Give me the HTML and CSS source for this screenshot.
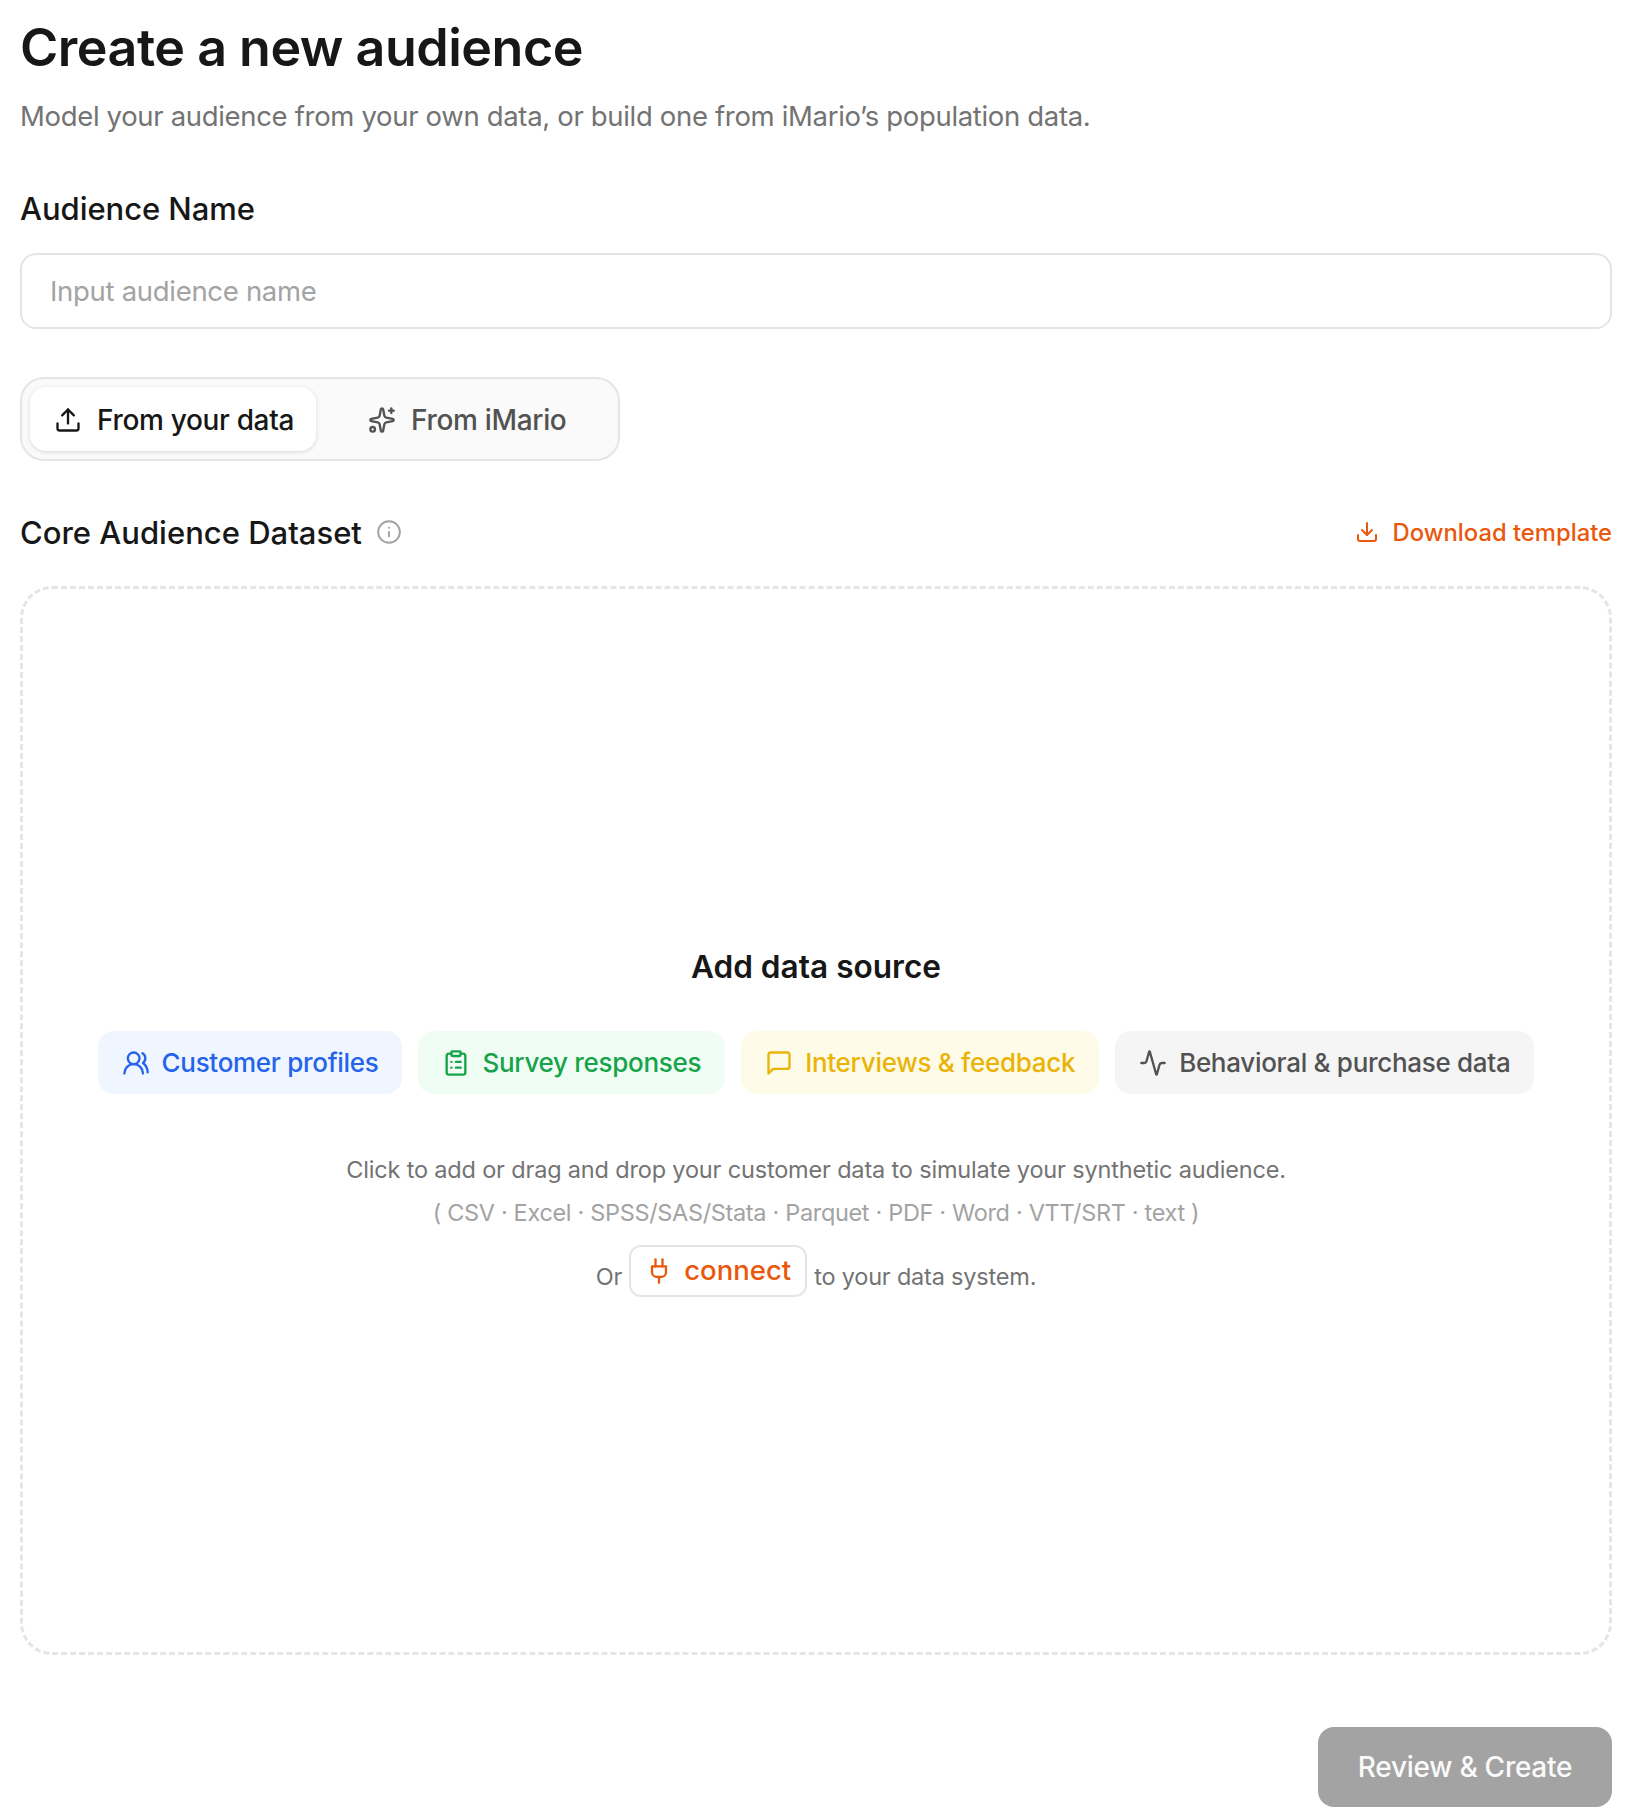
FILE: index.html
```html
<!DOCTYPE html>
<html lang="en">
<head>
<meta charset="utf-8">
<title>Create a new audience</title>
<link rel="stylesheet" href="styles.css">
</head>
<body>
<main class="page">
  <h1 class="title">Create a new audience</h1>
  <p class="subtitle">Model your audience from your own data, or build one from iMario’s population data.</p>
  <label class="label" for="name">Audience Name</label>
  <input class="name-input" id="name" type="text" placeholder="Input audience name">
  <div class="tabs">
    <button class="tab tab-active" type="button">
      <svg class="icon-tab" viewBox="0 0 24 24"><path d="M12 3v12"/><path d="m17 8-5-5-5 5"/><path d="M21 15v4a2 2 0 0 1-2 2H5a2 2 0 0 1-2-2v-4"/></svg>
      From your data
    </button>
    <button class="tab" type="button">
      <svg class="icon-tab" viewBox="0 0 24 24"><path d="M11.017 2.814a1 1 0 0 1 1.966 0l1.051 5.558a2 2 0 0 0 1.594 1.594l5.558 1.051a1 1 0 0 1 0 1.966l-5.558 1.051a2 2 0 0 0-1.594 1.594l-1.051 5.558a1 1 0 0 1-1.966 0l-1.051-5.558a2 2 0 0 0-1.594-1.594l-5.558-1.051a1 1 0 0 1 0-1.966l5.558-1.051a2 2 0 0 0 1.594-1.594z"/><path d="M20 2v4"/><path d="M22 4h-4"/><circle cx="4" cy="20" r="2"/></svg>
      From iMario
    </button>
  </div>
  <div class="section-head">
    <div class="section-title">
      <span>Core Audience Dataset</span>
      <svg class="icon-info" viewBox="0 0 24 24"><circle cx="12" cy="12" r="10"/><path d="M12 16v-4"/><path d="M12 8h.01"/></svg>
    </div>
    <a class="download" href="#">
      <svg class="icon-download" viewBox="0 0 24 24"><path d="M12 15V3"/><path d="M21 15v4a2 2 0 0 1-2 2H5a2 2 0 0 1-2-2v-4"/><path d="m7 10 5 5 5-5"/></svg>
      Download template
    </a>
  </div>
  <section class="dropzone">
    <h2 class="drop-title">Add data source</h2>
    <div class="chips">
      <span class="chip chip-blue"><svg class="icon-chip" viewBox="0 0 24 24"><path d="M18 21a8 8 0 0 0-16 0"/><circle cx="10" cy="8" r="5"/><path d="M22 20c0-3.37-2-6.5-4-8a5 5 0 0 0-.45-8.3"/></svg>Customer profiles</span>
      <span class="chip chip-green"><svg class="icon-chip" viewBox="0 0 24 24"><rect x="8" y="2" width="8" height="4" rx="1" ry="1"/><path d="M16 4h2a2 2 0 0 1 2 2v14a2 2 0 0 1-2 2H6a2 2 0 0 1-2-2V6a2 2 0 0 1 2-2h2"/><path d="M12 11h4"/><path d="M12 16h4"/><path d="M8 11h.01"/><path d="M8 16h.01"/></svg>Survey responses</span>
      <span class="chip chip-yellow"><svg class="icon-chip" viewBox="0 0 24 24"><path d="M21 15a2 2 0 0 1-2 2H7l-4 4V5a2 2 0 0 1 2-2h14a2 2 0 0 1 2 2z"/></svg>Interviews &amp; feedback</span>
      <span class="chip chip-gray"><svg class="icon-chip" viewBox="0 0 24 24"><path d="M22 12h-2.48a2 2 0 0 0-1.93 1.46l-2.35 8.36a.25.25 0 0 1-.48 0L9.24 2.18a.25.25 0 0 0-.48 0l-2.35 8.36A2 2 0 0 1 4.49 12H2"/></svg>Behavioral &amp; purchase data</span>
    </div>
    <p class="hint">Click to add or drag and drop your customer data to simulate your synthetic audience.</p>
    <p class="formats">( CSV · Excel · SPSS/SAS/Stata · Parquet · PDF · Word · VTT/SRT · text )</p>
    <div class="connect-row">
      <span>Or</span>
      <button class="connect" type="button"><svg class="icon-plug" viewBox="0 0 24 24"><path d="M12 22v-5"/><path d="M9 8V2"/><path d="M15 8V2"/><path d="M18 8v5a4 4 0 0 1-4 4h-4a4 4 0 0 1-4-4V8Z"/></svg>connect</button>
      <span>to your data system.</span>
    </div>
  </section>
  <div class="actions">
    <button class="submit" type="button">Review &amp; Create</button>
  </div>
</main>
</body>
</html>
```
FILE: styles.css
```css
* { box-sizing: border-box; }
html, body { margin: 0; background: #fff; }
body { font-family: Inter, "Liberation Sans", sans-serif; color: #171717; }
svg { fill: none; stroke: currentColor; stroke-width: 2; stroke-linecap: round; stroke-linejoin: round; flex: none; }
button { font-family: inherit; cursor: pointer; }
.page { padding: 24px 28px 13px 20px; display: flex; flex-direction: column; }
.title { margin: 0; font-size: 52px; line-height: 48px; font-weight: 600; letter-spacing: -0.5px; color: #171717; }
.subtitle { margin: 26px 0 0; font-size: 27.5px; line-height: 36px; letter-spacing: -0.33px; color: #737373; }
.label { margin-top: 59px; font-size: 31px; line-height: 32px; font-weight: 500; letter-spacing: -0.05px; color: #171717; }
.name-input { margin-top: 28px; height: 76px; border: 2px solid #e5e5e5; border-radius: 16px; padding: 0 28px; font: 400 27.5px Inter, sans-serif; letter-spacing: -0.3px; outline: none; }
.name-input::placeholder { color: #a3a3a3; opacity: 1; }
.tabs { margin-top: 48px; width: 600px; height: 84px; padding: 8px; display: flex; gap: 28px; background: #fafafa; border: 2px solid #e5e5e5; border-radius: 24px; }
.tab { height: 64px; padding: 1px 22px 0 24px; display: flex; align-items: center; gap: 15px; border: 0; background: transparent; border-radius: 16px; font-size: 28px; font-weight: 500; letter-spacing: -0.33px; color: #525252; }
.tab-active { background: #fff; color: #171717; box-shadow: 0 1px 4px rgba(0,0,0,.14); }
.icon-tab { width: 28px; height: 28px; }
.section-head { margin-top: 55px; height: 32px; display: flex; justify-content: space-between; align-items: center; }
.section-title { display: flex; align-items: center; gap: 14px; font-size: 31px; font-weight: 500; color: #171717; }
.icon-info { width: 26px; height: 26px; color: #a3a3a3; stroke-width: 1.8; }
.download { display: flex; align-items: center; gap: 14px; font-size: 23.8px; font-weight: 500; color: #ea580c; text-decoration: none; }
.icon-download { width: 24px; height: 24px; }
.dropzone { margin-top: 38px; height: 1069px; padding-top: 7px; border: 3px dashed #e5e5e5; border-radius: 32px; display: flex; flex-direction: column; align-items: center; justify-content: center; }
.drop-title { margin: 0; font-size: 31.6px; line-height: 32px; font-weight: 600; color: #171717; }
.chips { margin-top: 48px; display: flex; gap: 16px; }
.chip { height: 63px; padding: 0 24px; display: flex; align-items: center; gap: 12px; border-radius: 16px; font-size: 26px; font-weight: 500; letter-spacing: -0.3px; }
.icon-chip { width: 28px; height: 28px; }
.chip-blue { background: #eff6ff; color: #2563eb; }
.chip-green { background: #f0fdf4; color: #16a34a; }
.chip-yellow { background: #fefce8; color: #eab308; }
.chip-gray { background: #f5f5f5; color: #525252; }
.hint { margin: 58px 0 0; font-size: 23.5px; line-height: 36px; letter-spacing: -0.17px; color: #737373; }
.formats { margin: 7px 0 0; font-size: 23.5px; line-height: 36px; letter-spacing: -0.33px; color: #a3a3a3; }
.connect-row { margin-top: 14px; display: flex; align-items: flex-end; gap: 7px; font-size: 23.5px; line-height: 40px; letter-spacing: -0.2px; color: #737373; }
.connect { height: 52px; width: 178px; display: flex; align-items: center; justify-content: center; gap: 11px; background: #fff; border: 2px solid #e5e5e5; border-radius: 12px; font-size: 27.5px; line-height: 1; font-weight: 500; letter-spacing: 0; color: #ea580c; }
.icon-plug { width: 28px; height: 28px; }
.actions { margin-top: 72px; display: flex; justify-content: flex-end; }
.submit { width: 294px; height: 80px; border: 0; border-radius: 16px; background: #a3a3a3; color: #fafafa; font-size: 28px; font-weight: 500; letter-spacing: -0.27px; }
```
